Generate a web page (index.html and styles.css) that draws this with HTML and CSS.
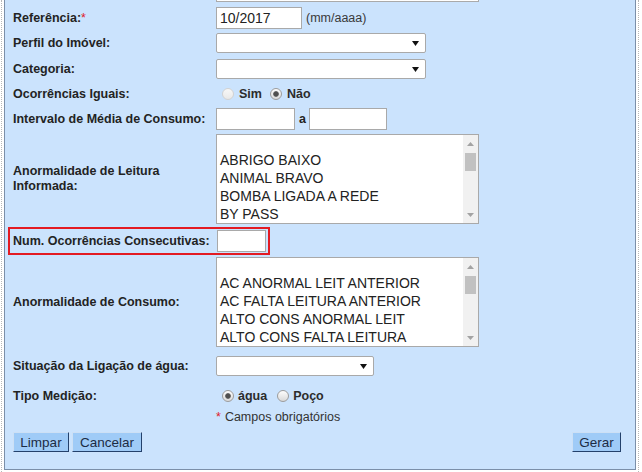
FILE: index.html
```html
<!DOCTYPE html>
<html lang="pt">
<head>
<meta charset="utf-8">
<title>Filtro</title>
<link rel="stylesheet" href="styles.css">
</head>
<body>
<div class="frame">
  <div class="panel">
    <div class="row top"><div class="lbl"></div><div class="cut"></div></div>

    <div class="row r-ref">
      <div class="lbl">Referência:<span class="req">*</span></div>
      <input class="inp w86" type="text" value="10/2017">
      <span class="hint">(mm/aaaa)</span>
    </div>

    <div class="row r-sel first">
      <div class="lbl">Perfil do Imóvel:</div>
      <div class="select w210"><svg class="arrow" width="7" height="5" viewBox="0 0 7 5"><polygon points="0,0 7,0 3.5,5" fill="#111"/></svg></div>
    </div>

    <div class="row r-sel">
      <div class="lbl">Categoria:</div>
      <div class="select w210"><svg class="arrow" width="7" height="5" viewBox="0 0 7 5"><polygon points="0,0 7,0 3.5,5" fill="#111"/></svg></div>
    </div>

    <div class="row r-radio">
      <div class="lbl">Ocorrências Iguais:</div>
      <input class="radio first-radio" type="radio" name="oc" disabled>
      <span class="rlabel">Sim</span>
      <input class="radio next-radio" type="radio" name="oc" checked>
      <span class="rlabel">Não</span>
    </div>

    <div class="row r-int">
      <div class="lbl">Intervalo de Média de Consumo:</div>
      <input class="inp w79" type="text">
      <span class="sep">a</span>
      <input class="inp w78" type="text">
    </div>

    <div class="row r-list">
      <div class="lbl">Anormalidade de Leitura<br>Informada:</div>
      <div class="listbox">
        <div class="items">
          <div class="blank"></div>
          <div class="item">ABRIGO BAIXO</div>
          <div class="item">ANIMAL BRAVO</div>
          <div class="item">BOMBA LIGADA A REDE</div>
          <div class="item">BY PASS</div>
        </div>
        <div class="sbar">
          <div class="sb-btn"><svg width="7" height="4" viewBox="0 0 7 4"><polygon points="0,4 7,4 3.5,0" fill="#a3a3a3"/></svg></div>
          <div class="thumb"></div>
          <div class="sb-fill"></div>
          <div class="sb-btn"><svg width="7" height="4" viewBox="0 0 7 4"><polygon points="0,0 7,0 3.5,4" fill="#a3a3a3"/></svg></div>
        </div>
      </div>
    </div>

    <div class="redbox">
      <div class="lbl wide">Num. Ocorrências Consecutivas:</div>
      <input class="inp w49" type="text">
    </div>

    <div class="row r-list2">
      <div class="lbl">Anormalidade de Consumo:</div>
      <div class="listbox">
        <div class="items">
          <div class="blank"></div>
          <div class="item">AC ANORMAL LEIT ANTERIOR</div>
          <div class="item">AC FALTA LEITURA ANTERIOR</div>
          <div class="item">ALTO CONS ANORMAL LEIT</div>
          <div class="item">ALTO CONS FALTA LEITURA</div>
        </div>
        <div class="sbar">
          <div class="sb-btn"><svg width="7" height="4" viewBox="0 0 7 4"><polygon points="0,4 7,4 3.5,0" fill="#a3a3a3"/></svg></div>
          <div class="thumb"></div>
          <div class="sb-fill"></div>
          <div class="sb-btn"><svg width="7" height="4" viewBox="0 0 7 4"><polygon points="0,0 7,0 3.5,4" fill="#a3a3a3"/></svg></div>
        </div>
      </div>
    </div>

    <div class="row r-sit">
      <div class="lbl">Situação da Ligação de água:</div>
      <div class="select w158"><svg class="arrow" width="7" height="5" viewBox="0 0 7 5"><polygon points="0,0 7,0 3.5,5" fill="#111"/></svg></div>
    </div>

    <div class="row r-tipo">
      <div class="lbl">Tipo Medição:</div>
      <input class="radio first-radio" type="radio" name="tm" checked>
      <span class="rlabel tight">água</span>
      <input class="radio wide-radio" type="radio" name="tm">
      <span class="rlabel tight">Poço</span>
    </div>

    <div class="row r-req">
      <div class="lbl"></div>
      <span class="req star">*</span><span class="reqtext">Campos obrigatórios</span>
    </div>

    <div class="buttons">
      <div class="bgroup">
        <button class="btn b-limpar" type="button">Limpar</button>
        <button class="btn b-cancelar" type="button">Cancelar</button>
      </div>
      <button class="btn b-gerar" type="button">Gerar</button>
    </div>
  </div>
</div>
</body>
</html>
```

FILE: styles.css
```css
* { box-sizing: border-box; }

body {
  margin: 0;
  background: #ffffff;
  font-family: "Liberation Sans", Arial, sans-serif;
  color: #222;
}

.frame {
  margin-left: 1px;
  width: 638px;
  border-left: 1px dotted #b8b8b8;
  border-right: 1px dotted #b8b8b8;
  padding: 0 2px 2px 2px;
}

.panel {
  width: 632px;
  background: #cbe3fd;
  border: 1px solid #7b8fa9;
  border-top: none;
  padding: 0 14px 17px 0;
}

.row {
  display: flex;
  align-items: center;
  padding-left: 8px;
}

.lbl {
  flex: none;
  width: 203px;
  font-size: 12.5px;
  font-weight: bold;
  line-height: 15px;
  color: #232323;
}

.lbl.wide { width: 204px; }

.req { color: #e0202a; font-weight: normal; }

.top { height: 3px; align-items: flex-start; }
.cut {
  width: 263px;
  height: 2px;
  background: #fff;
  border: 1px solid #aaa;
  border-top: none;
}

.r-ref { margin-top: 4px; height: 22px; }
.r-sel { margin-top: 6px; height: 20px; }
.r-sel.first { margin-top: 4px; }
.r-radio { margin-top: 6px; height: 18px; }
.r-int { margin-top: 5px; height: 22px; }
.r-list { margin-top: 4px; height: 90px; }
.r-list2 { margin-top: 2px; height: 90px; }
.r-sit { margin-top: 9px; height: 20px; }
.r-tipo { margin-top: 11px; height: 18px; }
.r-req { margin-top: 4px; height: 16px; }

.inp {
  height: 22px;
  margin: 0;
  padding: 0 3px;
  border: 1px solid #a9a9a9;
  background: #fff;
  font-family: "Liberation Sans", Arial, sans-serif;
  font-size: 14px;
  color: #222;
  outline: none;
}
.w86 { width: 86px; }
.w79 { width: 79px; }
.w78 { width: 78px; margin-left: 3px; }
.w49 { width: 49px; }

.hint {
  margin-left: 4px;
  font-size: 12.5px;
  color: #3a3a3a;
}

.sep {
  margin-left: 4px;
  font-size: 12.5px;
  font-weight: bold;
  color: #232323;
}

.select {
  height: 20px;
  display: flex;
  align-items: center;
  justify-content: flex-end;
  padding-right: 6px;
  background: #fff;
  border: 1px solid #a9a9a9;
  border-radius: 2px;
}
.w210 { width: 210px; }
.w158 { width: 158px; }
.arrow { display: block; }

.radio {
  appearance: none;
  -webkit-appearance: none;
  flex: none;
  width: 12px;
  height: 12px;
  margin: 0;
  border-radius: 50%;
  border: 1px solid #9c9c9c;
  background: linear-gradient(#fdfdfd, #d9d9d9);
}
.radio:checked {
  background:
    radial-gradient(circle, #4f4f4f 0 2px, #7a7a7a 2.6px, rgba(0,0,0,0) 3.2px),
    linear-gradient(#fdfdfd, #d9d9d9);
}
.radio:disabled {
  border-color: #d2d2d2;
  background: linear-gradient(#f7f7f7, #e9e9e9);
}
.first-radio { margin-left: 6px; }
.next-radio { margin-left: 8px; }
.wide-radio { margin-left: 10px; }

.rlabel {
  margin-left: 5px;
  font-size: 12.5px;
  font-weight: bold;
  color: #2c2c2c;
}
.rlabel.tight { margin-left: 4px; }

.listbox {
  display: flex;
  width: 263px;
  height: 90px;
  background: #fff;
  border: 1px solid #a9a9a9;
}
.items {
  flex: 1;
  padding-left: 3px;
  overflow: hidden;
  font-size: 14px;
  line-height: 18px;
  color: #222;
  white-space: nowrap;
}
.blank { height: 16px; }

.sbar {
  flex: none;
  width: 15px;
  display: flex;
  flex-direction: column;
  background: #f1f1f1;
}
.sb-btn {
  height: 17px;
  display: flex;
  align-items: center;
  justify-content: center;
}
.thumb {
  height: 18px;
  margin: 1px 2px 0 2px;
  background: #c1c1c1;
}
.sb-fill { flex: 1; }

.redbox {
  display: flex;
  align-items: center;
  width: 262px;
  margin-top: 3px;
  margin-left: 3px;
  border: 2px solid #e31b23;
  padding: 1px 2px 1px 3px;
}

.star { font-size: 12.5px; margin-right: 4px; }
.reqtext { font-size: 12.5px; color: #333; }

.buttons {
  margin-top: 7px;
  padding-left: 8px;
  display: flex;
  justify-content: space-between;
}
.bgroup { display: flex; gap: 3px; }

.btn {
  height: 20px;
  margin: 0;
  padding: 0;
  font-family: "Liberation Sans", Arial, sans-serif;
  font-size: 13.5px;
  color: #1c2c44;
  background: #9fcbf7;
  border: 1px solid;
  border-color: #cde0f5 #24416b #24416b #cde0f5;
  border-radius: 0;
}
.b-limpar { width: 56px; }
.b-cancelar { width: 70px; }
.b-gerar { width: 49px; }
```
